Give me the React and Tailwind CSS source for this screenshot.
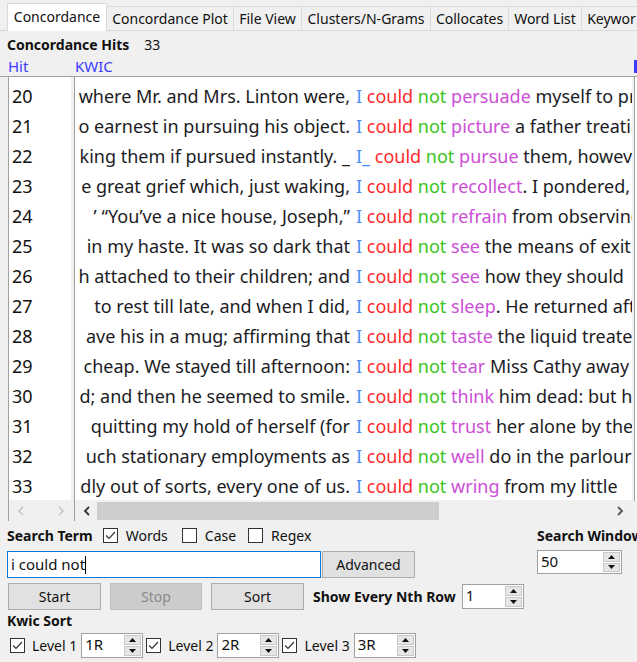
import React from "react";

const rows = [
  [20, "where Mr. and Mrs. Linton were,", "I", "persuade", " myself to prevail"],
  [21, "o earnest in pursuing his object.", "I", "picture", " a father treating"],
  [22, "king them if pursued instantly. _", "I_", "pursue", " them, however"],
  [23, "e great grief which, just waking,", "I", "recollect", ". I pondered, and"],
  [24, "’  “You’ve a nice house, Joseph,”", "I", "refrain", " from observing"],
  [25, "in my haste. It was so dark that", "I", "see", " the means of exit"],
  [26, "h attached to their children; and", "I", "see", " how they should"],
  [27, "to rest till late, and when I did,", "I", "sleep", ". He returned after"],
  [28, "ave his in a mug; affirming that", "I", "taste", " the liquid treated"],
  [29, "cheap.  We stayed till afternoon:", "I", "tear", " Miss Cathy away"],
  [30, "d; and then he seemed to smile.", "I", "think", " him dead: but he"],
  [31, "quitting my hold of herself (for", "I", "trust", " her alone by the"],
  [32, "uch stationary employments as", "I", "well", " do in the parlour"],
  [33, "dly out of sorts, every one of us.", "I", "wring", " from my little"],
];

const tabs = [
  ["Concordance", "w-[100px]", true],
  ["Concordance Plot", "w-[127px]", false],
  ["File View", "w-[68px]", false],
  ["Clusters/N-Grams", "w-[129px]", false],
  ["Collocates", "w-[78px]", false],
  ["Word List", "w-[73px]", false],
  ["Keywor", "w-[60px]", false],
];

function Check({ checked }) {
  return (
    <div className="w-[15px] h-[15px] border border-[#333] bg-white flex items-center justify-center shrink-0">
      {checked && (
        <svg width="11" height="9" viewBox="0 0 11 9">
          <path d="M1 4.5 L4 7.5 L10 1" stroke="#333" strokeWidth="1.2" fill="none" />
        </svg>
      )}
    </div>
  );
}

function Arrow({ up }) {
  return (
    <div className="flex-1 bg-[#e6e6e6] border border-[#c8c8c8] flex items-center justify-center">
      <svg width="7" height="4" viewBox="0 0 7 4">
        {up ? <path d="M3.5 0 L7 4 L0 4Z" fill="#111" /> : <path d="M0 0 L7 0 L3.5 4Z" fill="#111" />}
      </svg>
    </div>
  );
}

function Spin({ value, cls }) {
  return (
    <div className={"flex shrink-0 border border-[#a0a0a0] bg-white " + cls}>
      <div className="flex-1 pl-[3px] text-[15px] leading-[20px] text-[#111]">{value}</div>
      <div className="flex flex-col w-[18px] py-[1px] pr-[1px] gap-[1px]">
        <Arrow up />
        <Arrow />
      </div>
    </div>
  );
}

function Btn({ children, cls, disabled }) {
  return (
    <div
      className={
        "h-[27px] shrink-0 flex items-center justify-center border text-[14px] " +
        (disabled ? "bg-[#cccccc] border-[#bfbfbf] text-[#8a8a8a] " : "bg-[#e1e1e1] border-[#adadad] text-[#111] ") +
        cls
      }
    >
      {children}
    </div>
  );
}

export default function App() {
  return (
    <div className="w-[637px] h-[662px] bg-[#f0f0f0] overflow-hidden text-[#111]" style={{ fontFamily: '"Noto Sans", "Open Sans", sans-serif' }}>
      {/* tabs */}
      <div className="flex items-end h-[31px] pl-[7px] border-b border-[#d9d9d9] whitespace-nowrap">
        {tabs.map(([t, w, active]) => (
          <div
            key={t}
            className={
              "shrink-0 flex items-center justify-center text-[14px] " +
              w +
              (active
                ? " h-[28px] bg-white border border-b-0 border-[#d9d9d9] -mb-[1px] pb-[3px]"
                : " h-[24px] bg-[#f0f0f0] border-t border-r border-[#dadada]")
            }
          >
            {t}
          </div>
        ))}
      </div>

      {/* hits */}
      <div className="flex items-center h-[25px] pl-[7px] pt-[2px] text-[14px]">
        <span className="font-bold">Concordance Hits</span>
        <span className="ml-[15px]">33</span>
      </div>

      {/* headers */}
      <div className="flex h-[20px] items-center text-[15px] text-[#3b3bff] relative">
        <span className="ml-[8px] w-[67px]">Hit</span>
        <span>KWIC</span>
        <div className="absolute right-0 top-[4px] w-[3px] h-[13px] bg-[#3b3bff]" />
      </div>

      {/* table */}
      <div className="flex h-[445px] border-t border-[#a0a0a0]">
        <div className="w-[8px] shrink-0" />
        <div className="w-[63px] shrink-0 flex flex-col border-l border-[#a0a0a0]">
          <div className="flex-1 bg-white pt-[4px] overflow-hidden">
            {rows.map((r) => (
              <div key={r[0]} className="h-[30px] pl-[3px] text-[18px] leading-[30px]">{r[0]}</div>
            ))}
          </div>
          <div className="h-[21px] shrink-0 flex items-center">
            <svg className="ml-[8px]" width="8" height="10" viewBox="0 0 8 10"><path d="M6 1 L2 5 L6 9" stroke="#c4c4c4" strokeWidth="1.6" fill="none" /></svg>
            <svg className="ml-[32px]" width="8" height="10" viewBox="0 0 8 10"><path d="M2 1 L6 5 L2 9" stroke="#c4c4c4" strokeWidth="1.6" fill="none" /></svg>
          </div>
        </div>
        <div className="w-[3px] shrink-0" />
        <div className="w-[558px] shrink-0 flex flex-col border-l border-[#a0a0a0]">
          <div className="flex-1 bg-white pt-[4px] overflow-hidden text-[18px] text-[#1c1c24]">
            {rows.map((r) => (
              <div key={r[0]} className="h-[30px] leading-[30px] flex whitespace-nowrap">
                <div className="w-[275px] shrink-0 flex justify-end overflow-hidden">
                  <span className="shrink-0">{r[1]}</span>
                </div>
                <div className="pl-[6px] overflow-hidden">
                  <span className="text-[#4a8ff0]">{r[2]}</span>{" "}
                  <span className="text-[#ff2a2a]">could</span>{" "}
                  <span className="text-[#3cc41a]">not</span>{" "}
                  <span className="text-[#cc4fd6]">{r[3]}</span>
                  <span>{r[4]}</span>
                </div>
              </div>
            ))}
          </div>
          <div className="h-[21px] shrink-0 flex items-center">
            <svg className="ml-[8px] shrink-0" width="8" height="10" viewBox="0 0 8 10"><path d="M6 1 L2 5 L6 9" stroke="#333" strokeWidth="1.8" fill="none" /></svg>
            <div className="ml-[6px] w-[342px] h-[18px] bg-[#cdcdcd]" />
            <div className="flex-1" />
            <svg className="mr-[8px] shrink-0" width="8" height="10" viewBox="0 0 8 10"><path d="M2 1 L6 5 L2 9" stroke="#555" strokeWidth="1.8" fill="none" /></svg>
          </div>
        </div>
        <div className="w-[2px] shrink-0" />
        <div className="flex-1 border-l border-[#a0a0a0] bg-white h-[424px]" />
      </div>

      {/* search term row */}
      <div className="flex items-center h-[24px] mt-[2px] text-[14px] whitespace-nowrap">
        <div className="w-[530px] shrink-0 flex items-center pl-[7px]">
          <span className="font-bold">Search Term</span>
          <div className="ml-[10px]"><Check checked /></div>
          <span className="ml-[8px]">Words</span>
          <div className="ml-[14px]"><Check /></div>
          <span className="ml-[8px]">Case</span>
          <div className="ml-[12px]"><Check /></div>
          <span className="ml-[8px]">Regex</span>
        </div>
        <span className="font-bold ml-[7px] shrink-0">Search Window</span>
      </div>

      {/* input row */}
      <div className="flex items-start mt-[4px] h-[27px]">
        <div className="ml-[7px] shrink-0 w-[314px] h-[27px] border border-[#0078d7] bg-white flex items-center pl-[3px] text-[15px]">
          i could not<span className="w-[1px] h-[18px] bg-black" />
        </div>
        <Btn cls="ml-[1px] w-[93px]">Advanced</Btn>
        <Spin value="50" cls="ml-[122px] -mt-[1px] w-[85px] h-[24px]" />
      </div>

      {/* buttons row */}
      <div className="flex items-center mt-[4px] h-[28px] text-[14px] whitespace-nowrap">
        <Btn cls="ml-[8px] w-[93px]">Start</Btn>
        <Btn cls="ml-[9px] w-[92px]" disabled>Stop</Btn>
        <Btn cls="ml-[9px] w-[93px]">Sort</Btn>
        <span className="font-bold ml-[9px]">Show Every Nth Row</span>
        <Spin value="1" cls="ml-[6px] w-[62px] h-[25px]" />
      </div>

      {/* kwic sort */}
      <div className="pl-[7px] h-[20px] flex items-center font-bold text-[14px]">Kwic Sort</div>

      <div className="flex items-center mt-[3px] h-[25px] text-[14px] whitespace-nowrap">
        <div className="ml-[10px]"><Check checked /></div>
        <span className="ml-[7px]">Level 1</span>
        <Spin value="1R" cls="ml-[4px] w-[62px] h-[25px]" />
        <div className="ml-[3px]"><Check checked /></div>
        <span className="ml-[7px]">Level 2</span>
        <Spin value="2R" cls="ml-[4px] w-[62px] h-[25px]" />
        <div className="ml-[3px]"><Check checked /></div>
        <span className="ml-[7px]">Level 3</span>
        <Spin value="3R" cls="ml-[4px] w-[62px] h-[25px]" />
      </div>
    </div>
  );
}
